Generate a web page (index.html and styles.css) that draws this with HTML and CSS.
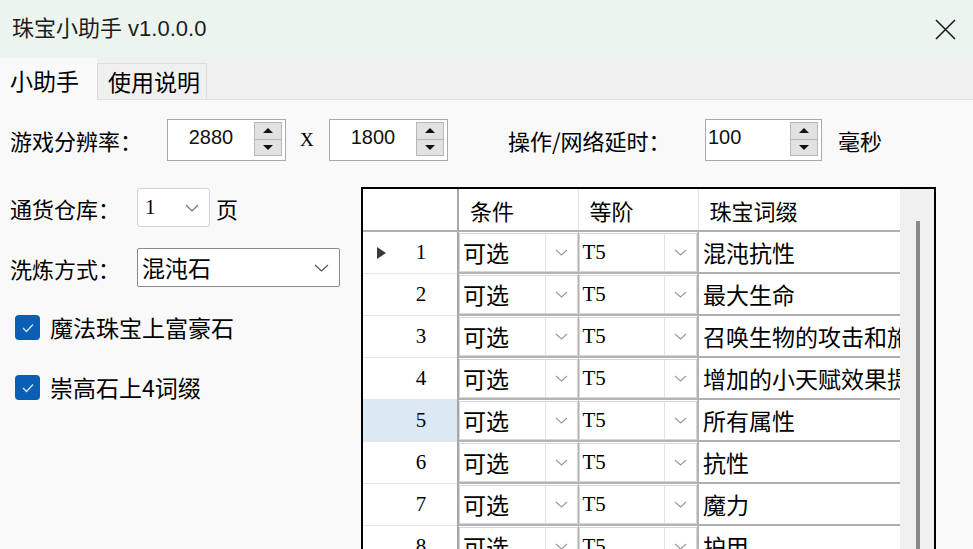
FILE: index.html
```html
<!doctype html>
<html lang="zh-CN">
  <head>
    <meta charset="UTF-8" />
    <title>珠宝小助手 v1.0.0.0</title>
    <link rel="stylesheet" href="styles.css">
  </head>
  <body>
    <div class="titlebar">
      <span class="title">珠宝小助手 v1.0.0.0</span>
      <svg class="close" width="21" height="21" viewBox="0 0 21 21">
        <path d="M1 1 L20 20 M20 1 L1 20" stroke="#1c1c1c" stroke-width="1.6" fill="none" />
      </svg>
    </div>

    <div class="tabs">
      <div class="tab active">小助手</div>
      <div class="tab">使用说明</div>
    </div>

    <div class="panel">
      <div class="row-top">
        <span class="lbl lbl-res">游戏分辨率：</span>
        <div class="spin">
          <span class="spin-val">2880</span>
          <div class="spin-btns">
            <div class="spin-btn up"></div>
            <div class="spin-btn down"></div>
          </div>
        </div>
        <span class="times">X</span>
        <div class="spin">
          <span class="spin-val">1800</span>
          <div class="spin-btns">
            <div class="spin-btn up"></div>
            <div class="spin-btn down"></div>
          </div>
        </div>
        <span class="lbl lbl-delay">操作/网络延时：</span>
        <div class="spin spin-delay">
          <span class="spin-val left">100</span>
          <div class="spin-btns">
            <div class="spin-btn up"></div>
            <div class="spin-btn down"></div>
          </div>
        </div>
        <span class="lbl unit">毫秒</span>
      </div>

      <div class="main">
        <div class="left">
          <div class="field field-store">
            <span class="lbl">通货仓库：</span>
            <div class="combo combo-page">
              <span class="combo-num">1</span>
              <svg width="14" height="8" viewBox="0 0 14 8"><path d="M1 1 L7 7 L13 1" stroke="#707070" stroke-width="1.2" fill="none" /></svg>
            </div>
            <span class="lbl page-unit">页</span>
          </div>

          <div class="field field-mode">
            <span class="lbl">洗炼方式：</span>
            <div class="combo combo-mode">
              <span class="combo-text">混沌石</span>
              <svg width="15" height="8" viewBox="0 0 15 8"><path d="M1 1 L7.5 7 L14 1" stroke="#505050" stroke-width="1.2" fill="none" /></svg>
            </div>
          </div>

          <label class="checkrow cb-first">
            <span class="check"><svg width="12" height="10" viewBox="0 0 12 10"><path d="M1 5 L4.5 8.5 L11 1.5" stroke="#d6e6f7" stroke-width="1.3" fill="none" /></svg></span>
            <span class="check-text">魔法珠宝上富豪石</span>
          </label>
          <label class="checkrow cb-second">
            <span class="check"><svg width="12" height="10" viewBox="0 0 12 10"><path d="M1 5 L4.5 8.5 L11 1.5" stroke="#d6e6f7" stroke-width="1.3" fill="none" /></svg></span>
            <span class="check-text">崇高石上4词缀</span>
          </label>
        </div>

        <div class="grid">
          <div class="grid-body">
            <table>
              <colgroup>
                <col class="c-head" />
                <col class="c-cond" />
                <col class="c-tier" />
                <col class="c-affix" />
              </colgroup>
              <thead>
                <tr>
                  <th class="corner"></th>
                  <th>条件</th>
                  <th>等阶</th>
                  <th>珠宝词缀</th>
                </tr>
              </thead>
              <tbody id="rows"></tbody>
            </table>
          </div>
          <div class="scroll"><div class="thumb"></div></div>
        </div>
      </div>
    </div>

    <script>
      const affixes = [
        '混沌抗性',
        '最大生命',
        '召唤生物的攻击和施法速度',
        '增加的小天赋效果提高',
        '所有属性',
        '抗性',
        '魔力',
        '护甲'
      ];

      const chevron =
        '<svg width="13" height="7" viewBox="0 0 13 7"><path d="M1 1 L6.5 6 L12 1" stroke="#9a9a9a" stroke-width="1.1" fill="none" /></svg>';

      const tbody = document.getElementById('rows');

      affixes.forEach((text, i) => {
        const tr = document.createElement('tr');
        let headClass = 'rh';
        if (i === 4) headClass += ' selected';
        const marker = i === 0 ? '<span class="marker"></span>' : '';

        tr.innerHTML =
          `<td class="${headClass}">${marker}${i + 1}</td>` +
          `<td class="cb"><div class="cell-combo"><span class="cell-text">可选</span><span class="cell-arrow">${chevron}</span></div></td>` +
          `<td class="cb"><div class="cell-combo"><span class="cell-text tier">T5</span><span class="cell-arrow">${chevron}</span></div></td>` +
          `<td class="txt">${text}</td>`;
        tbody.appendChild(tr);
      });
    </script>
  </body>
</html>
```

FILE: styles.css
```css
* {
  box-sizing: border-box;
  margin: 0;
  padding: 0;
}

body {
  width: 973px;
  height: 549px;
  overflow: hidden;
  background-color: #f9f9f9;
  color: #000;
  font-family: 'Noto Sans CJK SC', sans-serif;
}

/* title bar */
.titlebar {
  height: 58px;
  background-color: #ecf4f0;
  display: flex;
  align-items: center;
  justify-content: space-between;
  padding: 0 17px 0 12px;
}

.title {
  font-family: 'Liberation Sans', 'Noto Sans CJK SC', sans-serif;
  font-size: 22px;
  line-height: 1;
  color: #1c1c1c;
}

/* tabs */
.tabs {
  height: 42px;
  background-color: #f0f0f0;
  display: flex;
  align-items: flex-end;
  border-bottom: 1px solid #e2e2e2;
}

.tab {
  height: 36px;
  padding: 0 6px 0 10px;
  font-size: 23px;
  line-height: 1;
  display: flex;
  align-items: center;
  background-color: #f0f0f0;
  border: 1px solid #dcdcdc;
  border-bottom: none;
}

.tab.active {
  width: 97px;
  height: 42px;
  margin-bottom: -1px;
  padding-left: 10px;
  padding-top: 2px;
  background-color: #f9f9f9;
  border: none;
}

/* content */
.panel {
  padding-left: 10px;
}

.lbl {
  font-size: 22px;
  line-height: 1;
  white-space: nowrap;
}

.row-top {
  display: flex;
  align-items: center;
  height: 42px;
  margin-top: 19px;
}

.lbl-res {
  width: 157px;
}

.lbl-delay {
  width: 197px;
  margin-left: 60px;
}

.unit {
  margin-left: 16px;
}

.times {
  width: 43px;
  padding-left: 14px;
  font-family: 'Liberation Serif', serif;
  font-size: 19px;
}

.spin {
  width: 119px;
  height: 42px;
  display: flex;
  border: 1px solid #a9a9a9;
  background-color: #fff;
  padding: 2px 3px 4px 0;
}

.spin-delay {
  width: 117px;
}

.spin-val {
  flex: 1;
  text-align: center;
  font-family: 'Liberation Sans', sans-serif;
  font-size: 20px;
  line-height: 1;
  padding-top: 5px;
  color: #111;
}

.spin-val.left {
  text-align: left;
  padding-left: 2px;
}

.spin-btns {
  width: 28px;
  display: flex;
  flex-direction: column;
  border: 1px solid #b8b8b8;
}

.spin-btn {
  flex: 1;
  background-color: #e2e2e2;
  display: flex;
  align-items: center;
  justify-content: center;
}

.spin-btn.up {
  border-bottom: 1px solid #b8b8b8;
}

.spin-btn.up::before {
  content: '';
  border-left: 5px solid transparent;
  border-right: 5px solid transparent;
  border-bottom: 5px solid #111;
}

.spin-btn.down::before {
  content: '';
  border-left: 5px solid transparent;
  border-right: 5px solid transparent;
  border-top: 5px solid #111;
}

.main {
  display: flex;
  margin-top: 26px;
}

/* left column */
.left {
  width: 351px;
  display: flex;
  flex-direction: column;
}

.field {
  display: flex;
  align-items: center;
}

.field .lbl:first-child {
  width: 127px;
}

.field-store {
  margin-top: 1px;
}

.field-mode {
  margin-top: 21px;
}

.combo {
  height: 39px;
  display: flex;
  align-items: center;
  justify-content: space-between;
  background-color: #fff;
}

.combo-page {
  width: 73px;
  border: 1px solid #d2d2d2;
  border-radius: 3px;
  padding: 0 10px 0 7px;
}

.combo-num {
  font-family: 'Liberation Serif', serif;
  font-size: 21px;
}

.page-unit {
  margin-left: 6px;
}

.combo-mode {
  width: 203px;
  border: 1px solid #8a8a8a;
  border-radius: 2px;
  padding: 0 10px 0 4px;
}

.combo-text {
  font-size: 23px;
  line-height: 1;
}

.checkrow {
  display: flex;
  align-items: center;
  padding-left: 5px;
}

.cb-first {
  margin-top: 28px;
}

.cb-second {
  margin-top: 35px;
}

.check {
  width: 25px;
  height: 25px;
  border-radius: 4px;
  background-color: #0a5fb4;
  display: flex;
  align-items: center;
  justify-content: center;
}

.check-text {
  font-size: 23px;
  line-height: 1;
  margin-left: 10px;
}

/* data grid */
.grid {
  width: 575px;
  height: 390px;
  border: 2px solid #000;
  display: flex;
}

.grid-body {
  flex: 1;
  overflow: hidden;
  background-color: #fff;
}

table {
  border-collapse: collapse;
  table-layout: fixed;
  width: 594px;
}

.c-head {
  width: 95px;
}

.c-cond,
.c-tier {
  width: 120px;
}

.c-affix {
  width: 259px;
}

th {
  height: 38px;
  font-weight: normal;
  font-size: 22px;
  text-align: left;
  padding-left: 11px;
  border-right: 1px solid #e2e2e2;
  border-bottom: 2px solid #b0b0b0;
  background-color: #fff;
}

th.corner {
  border-right: 2px solid #a8a8a8;
}

tr {
  height: 42px;
}

td {
  height: 42px;
  vertical-align: middle;
}

.rh {
  position: relative;
  text-align: center;
  padding-left: 22px;
  font-family: 'Liberation Serif', serif;
  font-size: 21px;
  border-right: 2px solid #a8a8a8;
  border-bottom: 1px solid #e6e6e6;
}

.rh.selected {
  background-color: #dce8f4;
}

.marker {
  position: absolute;
  left: 14px;
  top: 15px;
  border-top: 6px solid transparent;
  border-bottom: 6px solid transparent;
  border-left: 9px solid #3a3a3a;
}

.cb {
  padding: 0;
  border: 1px solid #b4b4b4;
  border-bottom-width: 2px;
}

.cell-combo {
  height: 39px;
  display: flex;
  border: 1px solid #d6d6d6;
}

.cell-text {
  flex: 1;
  padding-left: 3px;
  font-size: 23px;
  line-height: 37px;
}

.cell-text.tier {
  font-family: 'Liberation Serif', serif;
  font-size: 21px;
}

.cell-arrow {
  width: 32px;
  border-left: 1px solid #e2e2e2;
  display: flex;
  align-items: center;
  justify-content: center;
}

.txt {
  padding-left: 4px;
  font-size: 23px;
  white-space: nowrap;
  overflow: hidden;
  border-left: 2px solid #b4b4b4;
  border-bottom: 2px solid #b0b0b0;
}

.scroll {
  width: 34px;
  background-color: #f0f0f0;
  padding: 32px 0 0 16px;
}

.thumb {
  width: 4px;
  height: 400px;
  background-color: #8a8a8a;
}
```
